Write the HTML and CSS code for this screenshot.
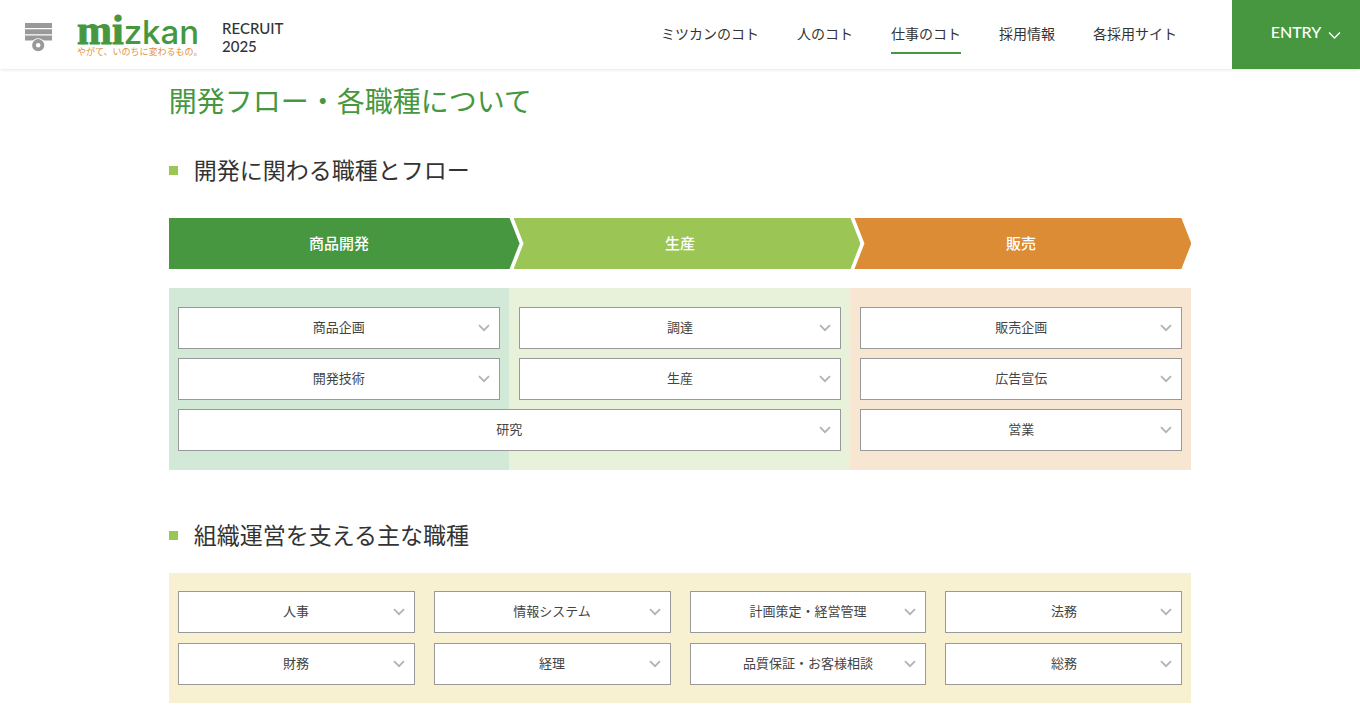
FILE: index.html
```html
<!DOCTYPE html>
<html lang="ja">
<head>
<meta charset="utf-8">
<meta name="viewport" content="width=device-width, initial-scale=1">
<title>仕事のコト | mizkan RECRUIT 2025</title>
<link rel="stylesheet" href="styles.css">
</head>
<body>
<svg class="defs" width="0" height="0" aria-hidden="true">
  <symbol id="chevron" viewBox="0 0 12 8"><path d="M1 1.2 L6 6.2 L11 1.2" fill="none" stroke="currentColor"/></symbol>
</svg>
<header class="header">
  <a class="brand" href="#">
    <svg class="brand-mark" viewBox="0 0 27 29" aria-hidden="true">
      <path d="M0 0H27V5H0zM0 6.2H27V11.2H0zM0 12.4H27V17.4H0z" fill="#999"/>
      <circle cx="13.2" cy="22.2" r="7" fill="#fff"/>
      <circle cx="13.2" cy="22.2" r="4.2" fill="none" stroke="#999" stroke-width="3.8"/>
    </svg>
    <span class="logo">
      <span class="logo-name"><span class="logo-mi">mi</span><span class="logo-zkan">zkan</span></span>
      <span class="logo-tag">やがて、いのちに変わるもの。</span>
    </span>
    <span class="brand-sub">RECRUIT<br>2025</span>
  </a>
  <nav class="nav">
    <a href="#">ミツカンのコト</a>
    <a href="#">人のコト</a>
    <a href="#" class="current" aria-current="page">仕事のコト</a>
    <a href="#">採用情報</a>
    <a href="#">各採用サイト</a>
  </nav>
  <button class="entry" type="button">ENTRY <svg class="entry-icon"><use href="#chevron"/></svg></button>
</header>
<main class="main">
  <h1 class="title">開発フロー・各職種について</h1>
  <section>
    <h2 class="heading">開発に関わる職種とフロー</h2>
    <ol class="steps">
      <li class="step step-develop"><span>商品開発</span></li>
      <li class="step step-produce"><span>生産</span></li>
      <li class="step step-sell"><span>販売</span></li>
    </ol>
    <div class="jobs jobs-flow">
      <a class="job" href="#">商品企画<svg><use href="#chevron"/></svg></a>
      <a class="job" href="#">調達<svg><use href="#chevron"/></svg></a>
      <a class="job" href="#">販売企画<svg><use href="#chevron"/></svg></a>
      <a class="job" href="#">開発技術<svg><use href="#chevron"/></svg></a>
      <a class="job" href="#">生産<svg><use href="#chevron"/></svg></a>
      <a class="job" href="#">広告宣伝<svg><use href="#chevron"/></svg></a>
      <a class="job job-wide" href="#">研究<svg><use href="#chevron"/></svg></a>
      <a class="job" href="#">営業<svg><use href="#chevron"/></svg></a>
    </div>
  </section>
  <section class="support">
    <h2 class="heading">組織運営を支える主な職種</h2>
    <div class="jobs jobs-support">
      <a class="job" href="#">人事<svg><use href="#chevron"/></svg></a>
      <a class="job" href="#">情報システム<svg><use href="#chevron"/></svg></a>
      <a class="job" href="#">計画策定・経営管理<svg><use href="#chevron"/></svg></a>
      <a class="job" href="#">法務<svg><use href="#chevron"/></svg></a>
      <a class="job" href="#">財務<svg><use href="#chevron"/></svg></a>
      <a class="job" href="#">経理<svg><use href="#chevron"/></svg></a>
      <a class="job" href="#">品質保証・お客様相談<svg><use href="#chevron"/></svg></a>
      <a class="job" href="#">総務<svg><use href="#chevron"/></svg></a>
    </div>
  </section>
</main>
</body>
</html>
```
FILE: styles.css
```css
* { box-sizing: border-box; }
body {
  margin: 0;
  background: #fff;
  color: #333;
  font-family: Lato, "Noto Sans CJK JP", sans-serif;
}
a { color: inherit; text-decoration: none; }
.defs { position: absolute; }

.header {
  display: flex;
  align-items: stretch;
  height: 69px;
  background: #fff;
  box-shadow: 0 1px 3px rgba(0, 0, 0, .1);
}
.brand { display: flex; align-items: flex-start; padding-left: 25px; }
.brand-mark { width: 27px; height: 29px; margin-top: 23px; }
.logo { display: flex; flex-direction: column; width: 121px; margin: 12px 24px 0 25px; white-space: nowrap; }
.logo-name { display: flex; align-items: baseline; height: 35px; line-height: 36px; color: #469740; }
.logo-mi { font-family: "Liberation Serif", serif; font-weight: 700; font-size: 42px; -webkit-text-stroke: 1px #469740; }
.logo-zkan { font-family: Inter, sans-serif; font-weight: 500; font-size: 33px; }
.logo-tag { font-family: "Noto Sans CJK JP", sans-serif; font-size: 9px; line-height: 10px; color: #e0923f; }
.brand-sub { margin-top: 19px; font-size: 15px; line-height: 18px; font-weight: 500; }

.nav { display: flex; align-items: flex-start; gap: 38px; margin-left: auto; margin-right: 55px; padding-top: 23px; font-size: 14px; line-height: 22px; }
.nav a { padding-bottom: 7px; border-bottom: 2px solid transparent; white-space: nowrap; }
.nav .current { border-color: #469740; }
.entry {
  display: flex;
  align-items: center;
  justify-content: center;
  gap: 7px;
  width: 128px;
  padding: 0 0 6px 20px;
  border: 0;
  background: #469740;
  color: #fff;
  font: 500 16px/20px Lato, sans-serif;
}
.entry-icon { width: 13px; height: 9px; margin-top: 8px; stroke-width: 1.3; }

.main { width: 75.2%; margin: 0 auto; padding: 11px 0 9px; }
.title { margin: 0 0 31px; font-size: 28px; line-height: 42px; font-weight: 400; color: #469740; }
.heading { display: flex; align-items: center; gap: 16px; margin: 0; font-size: 23px; line-height: 34px; font-weight: 400; }
.heading::before { content: ""; width: 9px; height: 9px; background: #9bc655; }

.steps { display: grid; grid-template-columns: repeat(3, 1fr); margin: 31px 0 19px; padding: 0; list-style: none; }
.step { position: relative; display: flex; align-items: center; justify-content: center; height: 51px; padding-bottom: 2px; color: #fff; font-size: 15px; font-weight: 500; }
.step span { position: relative; }
.step::before {
  content: "";
  position: absolute;
  inset: 0 -10px 0 4px;
  background: #9bc655;
  clip-path: polygon(0 0, calc(100% - 10px) 0, 100% 50%, calc(100% - 10px) 100%, 0 100%, 10px 50%);
}
.step-develop::before { left: 0; background: #469740; clip-path: polygon(0 0, calc(100% - 10px) 0, 100% 50%, calc(100% - 10px) 100%, 0 100%); }
.step-sell::before { right: 0; background: #db8c34; }

.jobs { display: grid; column-gap: 19px; }
.jobs-flow {
  grid-template-columns: repeat(3, 1fr);
  row-gap: 9px;
  padding: 19px 9px;
  background: linear-gradient(90deg, #d3e9d8 33.3%, #e8f1da 33.3% 66.6%, #f7e6d2 66.6%);
}
.jobs-support { grid-template-columns: repeat(4, 1fr); row-gap: 10px; margin-top: 21px; padding: 18px 9px; background: #f7f1d2; }
.job {
  position: relative;
  display: flex;
  align-items: center;
  justify-content: center;
  height: 42px;
  padding-bottom: 4px;
  border: 1px solid #999;
  background: #fff;
  color: #444;
  font-size: 13px;
}
.job svg { position: absolute; right: 9px; top: 16px; width: 12px; height: 8px; color: #b3b3b3; stroke-width: 1.8; }
.job-wide { grid-column: span 2; }
.support { margin-top: 48px; }
```
